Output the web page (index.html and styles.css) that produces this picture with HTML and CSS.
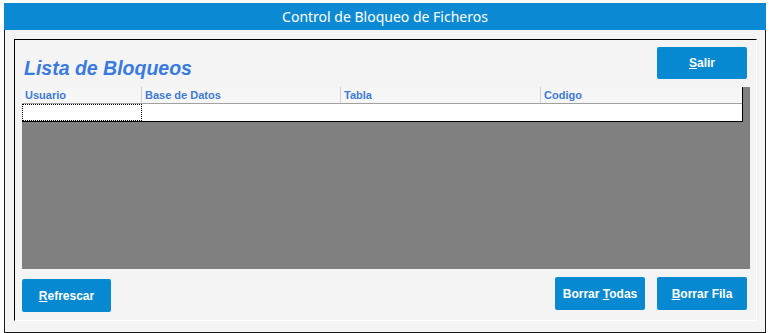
FILE: index.html
```html
<!DOCTYPE html>
<html lang="es">
<head>
<meta charset="utf-8">
<title>Control de Bloqueo de Ficheros</title>
<link rel="stylesheet" href="styles.css">
</head>
<body>
<div class="window">
  <div class="titlebar">Control de Bloqueo de Ficheros</div>
  <div class="client">
    <div class="panel">
      <div class="top-row">
        <h1 class="list-title">Lista de Bloqueos</h1>
        <button class="btn"><u>S</u>alir</button>
      </div>
      <div class="grid">
        <div class="table">
          <div class="thead">
            <div class="th c1">Usuario</div>
            <div class="th c2">Base de Datos</div>
            <div class="th c3">Tabla</div>
            <div class="th c4">Codigo</div>
          </div>
          <div class="trow">
            <div class="td c1 focus"></div>
            <div class="td c2"></div>
            <div class="td c3"></div>
            <div class="td c4"></div>
          </div>
        </div>
      </div>
      <div class="bottom-row">
        <button class="btn btn-low"><u>R</u>efrescar</button>
        <div class="right-btns">
          <button class="btn">Borrar <u>T</u>odas</button>
          <button class="btn"><u>B</u>orrar Fila</button>
        </div>
      </div>
    </div>
  </div>
</div>
</body>
</html>
```
FILE: styles.css
```css
html, body {
  margin: 0;
  padding: 0;
  background: #ffffff;
}
body {
  width: 771px;
  height: 333px;
  overflow: hidden;
  font-family: "Liberation Sans", Arial, sans-serif;
}
.window {
  margin: 3px 0 0 4px;
  width: 762px;
}
.titlebar {
  height: 27px;
  line-height: 27px;
  background: #0b8ad3;
  color: #ffffff;
  text-align: center;
  font-family: "Noto Sans", "Open Sans", sans-serif;
  font-size: 14px;
}
.client {
  background: #f4f4f4;
  border: 1px solid #1a1a1a;
  border-top: none;
  padding: 9px 8px 11px 9px;
}
.panel {
  border-top: 1px solid #000000;
  border-left: 1px solid #000000;
  border-right: 1px solid #ffffff;
  border-bottom: 1px solid #ffffff;
  padding: 7px 6px 8px 7px;
  display: flex;
  flex-direction: column;
}
.top-row {
  display: flex;
  justify-content: space-between;
  height: 32px;
  margin-bottom: 8px;
  padding-right: 3px;
}
.list-title {
  margin: 0 0 0 2px;
  padding-top: 10px;
  line-height: 22px;
  font-size: 19.5px;
  font-weight: bold;
  font-style: italic;
  color: #3a7ae0;
}
.btn {
  width: 90px;
  height: 33px;
  margin: 0;
  padding: 0;
  border: none;
  border-radius: 2px;
  background: #0789d1;
  color: #ffffff;
  font-family: "Liberation Sans", Arial, sans-serif;
  font-size: 12px;
  font-weight: bold;
}
.top-row .btn {
  height: 32px;
}
.btn u {
  text-underline-offset: 1px;
}
.grid {
  height: 182px;
  background: #808080;
}
.table {
  width: 720px;
  border-right: 1px solid #000000;
}
.thead {
  display: flex;
  height: 16px;
  background: #f6f6f6;
  border-bottom: 1px solid #a0a0a0;
}
.th {
  box-sizing: border-box;
  padding-left: 3px;
  line-height: 16px;
  font-size: 11px;
  font-weight: bold;
  color: #3f7ad6;
  border-right: 1px solid #cfcfcf;
}
.trow {
  display: flex;
  height: 17px;
  background: #ffffff;
  border-bottom: 1px solid #000000;
}
.td {
  box-sizing: border-box;
}
.c1 { width: 120px; }
.c2 { width: 199px; }
.c3 { width: 200px; }
.c4 { width: 201px; border-right: none; }
.focus {
  border: 1px dotted #000000;
}
.bottom-row {
  display: flex;
  justify-content: space-between;
  margin-top: 8px;
  padding-right: 3px;
}
.btn-low {
  width: 89px;
  margin-top: 2px;
}
.right-btns {
  display: flex;
  gap: 12px;
}
```
